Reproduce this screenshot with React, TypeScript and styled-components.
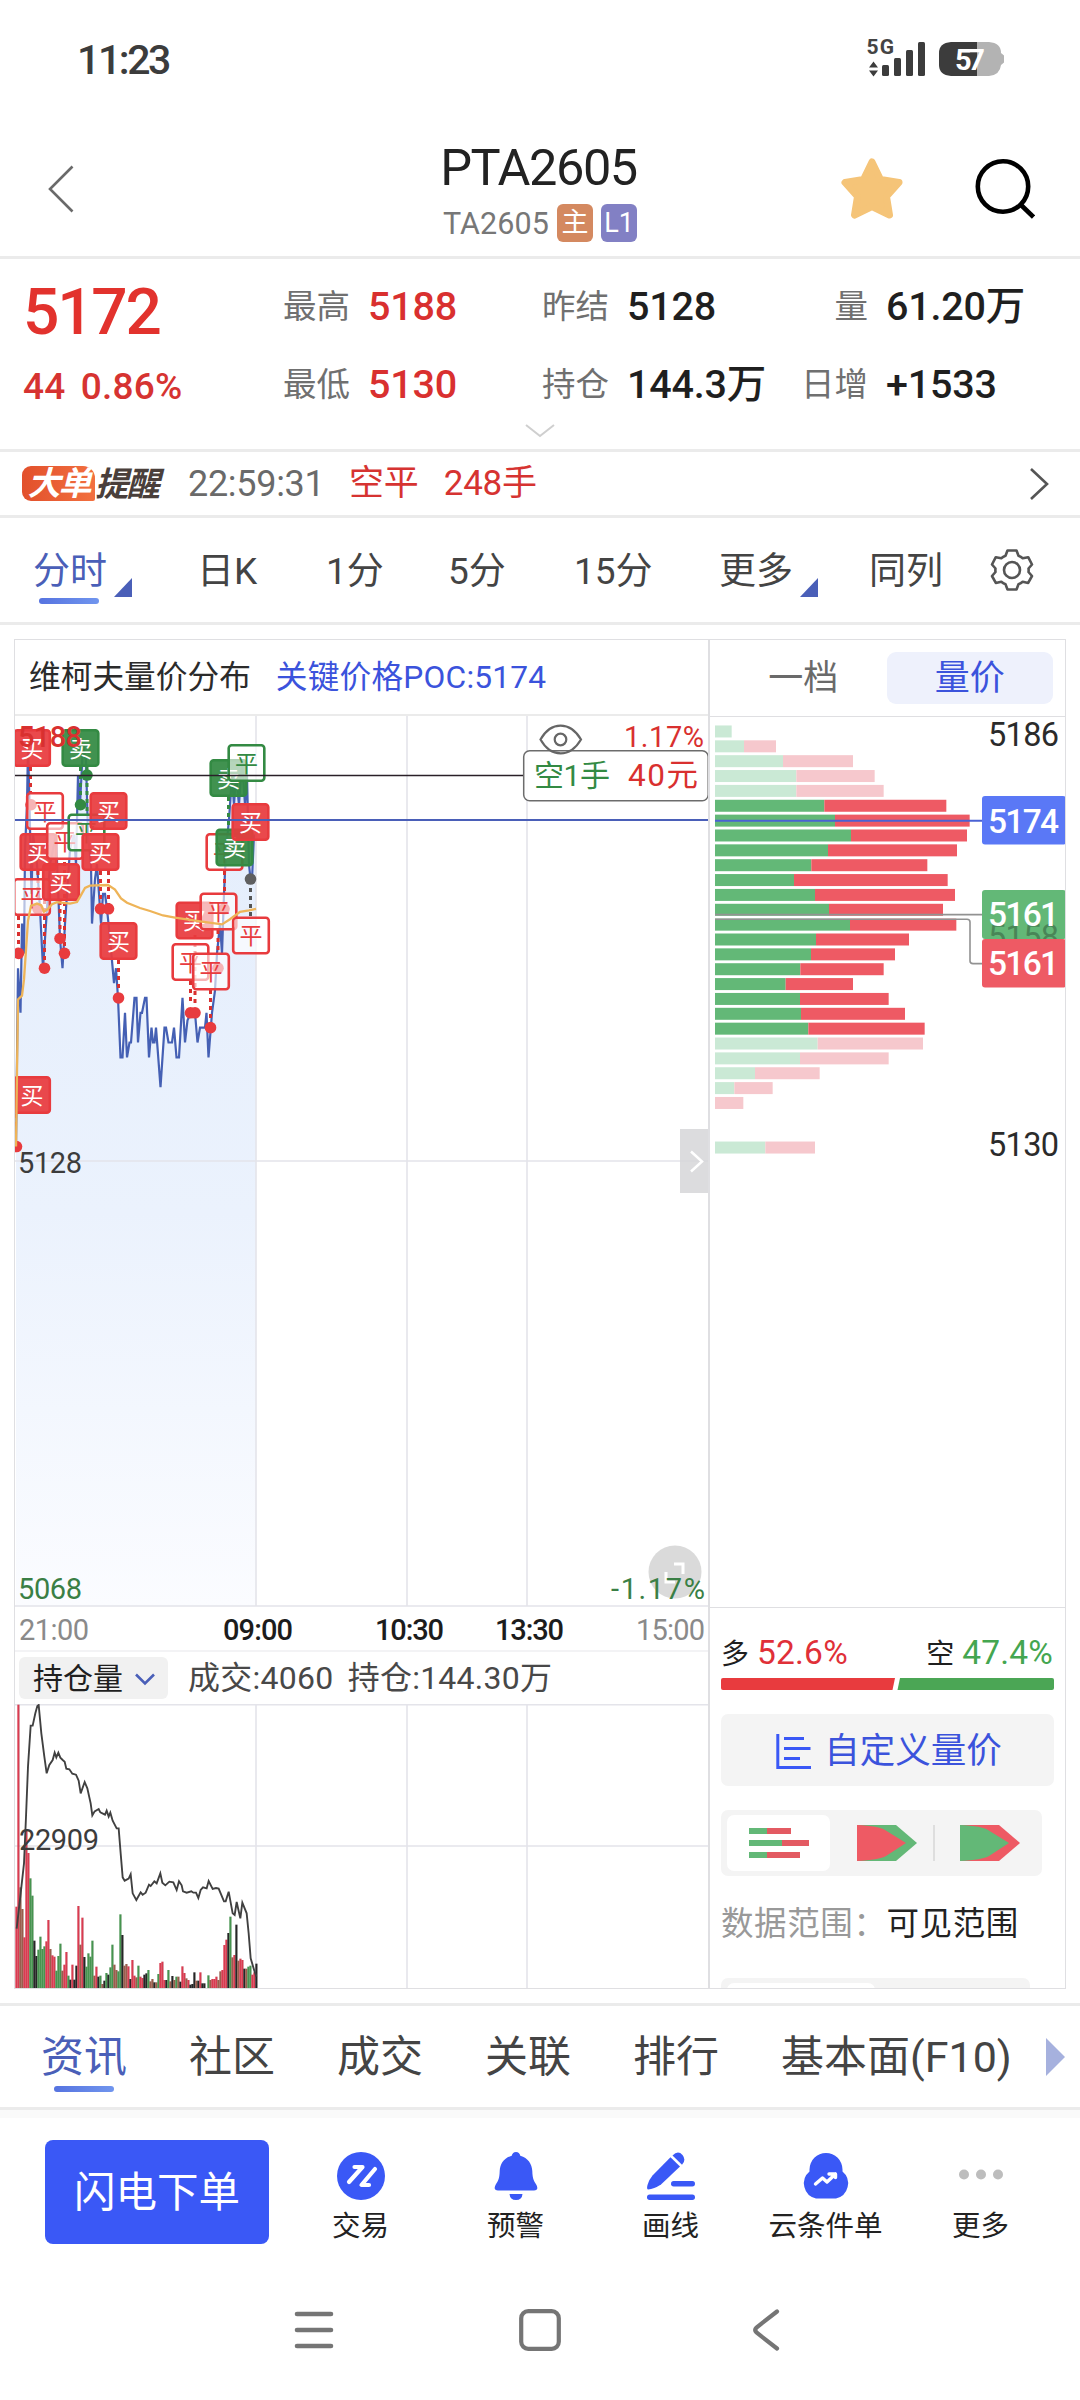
import React from "react";
import styled, { createGlobalStyle, css } from "styled-components";

const C = {
  red: "#d9302f",
  up: "#e83b3e",
  down: "#338a43",
  greenBar: "#63b877",
  redBar: "#ee5a64",
  greenSoft: "#cae9d5",
  redSoft: "#f6c8cd",
  navy: "#4a5fb8",
  blue: "#3b53dc",
  brand: "#3a58f6",
  line: "#ebebeb",
  grid: "#e4e4ea",
  ink: "#1f1f1f",
};

const FONT = `Roboto, "Noto Sans CJK SC", sans-serif`;

const Global = createGlobalStyle`
  html, body { margin: 0; padding: 0; background: #fff; }
  body { font-family: ${FONT}; color: ${C.ink}; line-height: 1.2; }
  * { box-sizing: border-box; }
  svg { display: block; flex: none; }
  svg text { font-family: ${FONT}; }
`;

const Screen = styled.div`
  width: 1080px;
  height: 2400px;
  display: flex;
  flex-direction: column;
  background: #fff;
  overflow: hidden;
  white-space: nowrap;
`;

/* ---------- status bar & header ---------- */

const StatusBar = styled.div`
  height: 118px;
  padding: 0 76px 0 77px;
  display: flex;
  align-items: center;
  justify-content: space-between;
`;

const Clock = styled.div`
  padding-top: 3px;
  font-size: 41px;
  font-weight: 500;
  letter-spacing: -2.4px;
  color: #3c3c3c;
`;

const Header = styled.div`
  height: 141px;
  border-bottom: 3px solid ${C.line};
  display: grid;
  grid-template-columns: 1fr auto 1fr;
`;

const HeaderSide = styled.div<{ $end?: boolean }>`
  display: flex;
  align-items: center;
  justify-content: ${(p) => (p.$end ? "flex-end" : "flex-start")};
  gap: 72px;
  padding: ${(p) => (p.$end ? "3px 45px 0 0" : "3px 0 0 48px")};
`;

const TitleBlock = styled.div`
  display: flex;
  flex-direction: column;
  align-items: center;
  padding-top: 20px;
`;

const Title = styled.div`
  margin-right: 3px;
  font-size: 50.5px;
  line-height: 60px;
  letter-spacing: -1.4px;
  color: #222;
`;

const SubTitle = styled.div`
  height: 38px;
  margin-top: 6px;
  display: flex;
  align-items: center;
  gap: 8px;
  font-size: 30.5px;
  color: #777;
`;

const Code = styled.span`
  padding-top: 2px;
  letter-spacing: 0.1px;
`;

const Badge = styled.span<{ $bg: string }>`
  width: 36px;
  height: 38px;
  border-radius: 6px;
  background: ${(p) => p.$bg};
  color: #fff;
  font-size: 27px;
  line-height: 39px;
  text-align: center;
`;

/* ---------- quote ---------- */

const Quote = styled.div`
  height: 193px;
  border-bottom: 3px solid ${C.line};
  padding-top: 8px;
  display: grid;
  grid-template-columns: 283px 259px 259px 279px;
  grid-template-rows: 78px 78px 15px;
  align-items: center;
`;

const Last = styled.div`
  padding: 13px 0 0 23px;
  font-size: 64px;
  line-height: 68px;
  font-weight: 500;
  letter-spacing: -2.2px;
  color: #e2322d;
`;

const Change = styled.div`
  padding: 7px 0 0 23px;
  font-size: 37px;
  font-weight: 500;
  word-spacing: 6px;
  letter-spacing: 0.2px;
  color: #d63331;
`;

const Stat = styled.div`
  display: flex;
  align-items: center;
`;

const StatLabel = styled.span`
  width: 67px;
  margin-right: 18px;
  padding-top: 3px;
  font-size: 33.5px;
  text-align: right;
  color: #707070;
`;

const StatValue = styled.span<{ $up?: boolean }>`
  padding-top: 1px;
  font-size: 39.5px;
  font-weight: 500;
  letter-spacing: -0.2px;
  color: ${(p) => (p.$up ? C.red : C.ink)};
`;

const Expand = styled.div`
  grid-column: 1 / -1;
  display: flex;
  justify-content: center;
`;

/* ---------- alert ---------- */

const Alert = styled.div`
  height: 66px;
  border-bottom: 3px solid ${C.line};
  padding: 0 31px 0 22px;
  display: flex;
  align-items: center;
`;

const AlertTag = styled.span`
  width: 73px;
  height: 35px;
  border-radius: 9px 12px 2px 9px;
  background: linear-gradient(90deg, #e2502c, #f2703f);
  color: #fff;
  font-size: 33px;
  font-weight: 700;
  line-height: 35px;
  letter-spacing: -2px;
  text-align: center;
  font-style: italic;
`;

const AlertName = styled.span`
  width: 93px;
  padding-top: 3px;
  font-size: 33.5px;
  font-weight: 700;
  letter-spacing: -2px;
  font-style: italic;
  color: #4a3f3b;
`;

const AlertTime = styled.span`
  width: 161px;
  padding-top: 3px;
  font-size: 36px;
  letter-spacing: -0.3px;
  color: #6a6a6a;
`;

const AlertText = styled.span`
  flex: 1;
  font-size: 35px;
  word-spacing: 17px;
  letter-spacing: -0.3px;
  color: #d63331;
`;

/* ---------- tabs ---------- */

const underline = css`
  &::after {
    content: "";
    position: absolute;
    width: 60px;
    height: 6px;
    border-radius: 3px;
    background: linear-gradient(90deg, #5673e0, #7095ee);
  }
`;

const PeriodTabs = styled.div`
  height: 107px;
  border-bottom: 3px solid ${C.line};
  padding-left: 33px;
  display: grid;
  grid-template-columns: 164px 129px 122px 126px 145px 150px 121px auto;
  align-items: center;
`;

const PeriodTab = styled.div<{ $active?: boolean }>`
  position: relative;
  height: 104px;
  padding-top: 4px;
  display: flex;
  align-items: center;
  font-size: 37px;
  color: ${(p) => (p.$active ? C.navy : "#444")};
  ${(p) => p.$active && underline}
  &::after {
    left: 6px;
    top: 80px;
  }
`;

const Corner = styled.i`
  align-self: flex-end;
  width: 18px;
  height: 19px;
  margin: 0 0 25px 7px;
  background: ${C.navy};
  clip-path: polygon(100% 0, 100% 100%, 0 100%);
`;

/* ---------- chart panel ---------- */

const Panel = styled.div`
  flex: none;
  margin: 14px 14px 0;
  height: 1350px;
  border: 1px solid #dfdfe2;
  display: flex;
  overflow: hidden;
`;

const Left = styled.div`
  width: 694px;
  flex: none;
`;

const ChartHead = styled.div`
  height: 76px;
  border-bottom: 2px solid ${C.line};
  padding: 2px 0 0 14px;
  display: flex;
  align-items: center;
  gap: 25px;
  font-size: 31.7px;
  color: #2b2b2b;
`;

const Poc = styled.span`
  letter-spacing: 0.2px;
  color: ${C.blue};
`;

const SubBar = styled.div`
  height: 54px;
  border-top: 2px solid #f3f3f5;
  display: flex;
  align-items: center;
  gap: 20px;
  padding-left: 4px;
  font-size: 32px;
  color: #484848;
  word-spacing: 6px;
  letter-spacing: 0.25px;
`;

const Indicator = styled.div`
  width: 149px;
  height: 42px;
  border-radius: 6px;
  background: #f1f1f1;
  display: flex;
  align-items: center;
  justify-content: space-between;
  padding: 2px 13px 0 14px;
  font-size: 30px;
  letter-spacing: 0;
  color: #1f1f1f;
`;

const Right = styled.div`
  flex: 1;
  margin-left: -1px;
  border-left: 2px solid #dfdfe2;
  display: flex;
  flex-direction: column;
`;

const SideTabs = styled.div`
  height: 77px;
  flex: none;
  border-bottom: 1px solid #dfdfe2;
  display: flex;
  align-items: center;
  padding: 0 12px 0 10px;
`;

const SideTab = styled.div<{ $active?: boolean }>`
  flex: 1;
  height: 52px;
  line-height: 54px;
  border-radius: 9px;
  text-align: center;
  font-size: 35px;
  color: ${(p) => (p.$active ? C.blue : "#6a6a6a")};
  background: ${(p) => (p.$active ? "#eef1fc" : "transparent")};
`;

const SideFoot = styled.div`
  flex: 1;
  border-top: 1px solid #dfdfe2;
  padding: 24px 11px 0 11px;
  display: flex;
  flex-direction: column;
`;

const Ratio = styled.div`
  height: 46px;
  display: flex;
  align-items: center;
  justify-content: space-between;
  padding: 0 1px 4px 0;
  font-size: 28px;
`;

const RatioValue = styled.span<{ $c: string }>`
  margin-left: 8px;
  font-size: 33.5px;
  letter-spacing: 0.2px;
  color: ${(p) => p.$c};
`;

const Custom = styled.div`
  margin-top: 24px;
  height: 72px;
  border-radius: 7px;
  background: #f4f4f4;
  display: flex;
  align-items: center;
  justify-content: center;
  gap: 13px;
  padding: 3px 0 0 3px;
  font-size: 35.5px;
  color: ${C.blue};
`;

const Segments = styled.div`
  margin-top: 24px;
  width: 321px;
  height: 66px;
  padding: 5px 6px;
  border-radius: 7px;
  background: #f4f4f4;
  display: flex;
`;

const Segment = styled.div<{ $active?: boolean; $rule?: boolean }>`
  position: relative;
  width: 103px;
  flex: none;
  border-radius: 7px;
  padding-left: ${(p) => (p.$active ? 0 : 10)}px;
  background: ${(p) => (p.$active ? "#fff" : "transparent")};
  display: flex;
  align-items: center;
  justify-content: center;
  ${(p) =>
    p.$rule &&
    css`
      &::after {
        content: "";
        position: absolute;
        right: -2px;
        top: 10px;
        width: 2px;
        height: 36px;
        background: #dedede;
      }
    `}
`;

const Range = styled.div`
  margin-top: 22px;
  height: 50px;
  line-height: 52px;
  font-size: 32.5px;
  letter-spacing: 0.6px;
  color: #999;
`;

const RangeValue = styled.span`
  color: #222;
`;

const Peek = styled.div`
  margin-top: 30px;
  width: 309px;
  height: 40px;
  border-radius: 7px;
  background: #f4f4f4;
  padding: 5px 6px;
`;

const PeekActive = styled.div`
  width: 148px;
  height: 34px;
  border-radius: 7px;
  background: #fff;
`;

/* ---------- bottom ---------- */

const InfoTabs = styled.div`
  flex: none;
  margin-top: 14px;
  height: 107px;
  border-top: 3px solid ${C.line};
  border-bottom: 3px solid ${C.line};
  padding-left: 41px;
  display: grid;
  grid-template-columns: 148px 148px 148px 148px 148px 265px auto;
  align-items: center;
`;

const InfoTab = styled.div<{ $active?: boolean }>`
  position: relative;
  font-size: 43px;
  line-height: 100px;
  color: ${(p) => (p.$active ? C.navy : "#444")};
  ${(p) => p.$active && underline}
  &::after {
    left: 13px;
    top: 79px;
  }
`;

const Band = styled.div`
  flex: none;
  height: 8px;
  background: #fafafa;
`;

const Actions = styled.div`
  flex: none;
  height: 148px;
  padding: 22px 0 0 45px;
  display: flex;
`;

const OrderButton = styled.div`
  width: 224px;
  height: 104px;
  margin-right: 14px;
  border-radius: 8px;
  background: ${C.brand};
  color: #fff;
  font-size: 41.5px;
  line-height: 106px;
  text-align: center;
`;

const Action = styled.div`
  width: 155px;
  padding-top: 12px;
  display: flex;
  flex-direction: column;
  align-items: center;
  font-size: 28.5px;
  line-height: 34px;
  gap: 10px;
  color: #222;
`;

const NavBar = styled.div`
  flex: 1;
  padding-top: 43px;
  display: flex;
  justify-content: center;
  gap: 184px;
`;

/* ---------- data ---------- */

const yOf = (price: number) => 1161.4 - (price - 5128) * 7.43;

const PRICES: [number, number][] = [
  [16, 5130], [18, 5154], [20.5, 5148], [22, 5160], [24, 5156], [25, 5170], [27, 5176], [28, 5184],
  [29.5, 5176], [31.5, 5164], [33, 5172], [37, 5168], [40, 5162], [43, 5154], [46, 5160], [50, 5168],
  [56, 5172], [60, 5158], [62.5, 5154], [65, 5160], [70, 5170], [74, 5172], [76, 5168], [78, 5180],
  [80, 5176], [83, 5184], [86, 5182], [88, 5172], [91, 5168], [92, 5160], [95, 5166], [97, 5168],
  [101, 5160], [103, 5164], [105, 5164], [107, 5162], [110, 5158], [112, 5155], [114, 5152], [116, 5154],
  [118, 5150], [120.5, 5142], [122.5, 5142], [125, 5148], [127, 5142], [129.5, 5144], [131, 5144],
  [134.5, 5150], [136.5, 5150], [138, 5144], [140.5, 5148], [142, 5148], [145, 5150], [146.5, 5150],
  [149, 5142], [151.5, 5146], [153, 5144], [154.5, 5144], [156, 5146], [160.5, 5138], [164.5, 5146],
  [166, 5146], [168.5, 5144], [172, 5144], [174, 5146], [176.5, 5142], [179, 5142], [182.5, 5150],
  [185, 5144], [187.5, 5147], [191, 5148], [195, 5148], [197.5, 5144], [200, 5146], [205, 5146],
  [206.5, 5148], [208.5, 5142], [212, 5148], [215, 5151], [217, 5156], [220, 5160], [222, 5156],
  [224, 5164], [226, 5170], [229, 5174], [232, 5180], [234, 5176], [236, 5180], [239, 5176], [242, 5182],
  [245, 5176], [247, 5180], [249, 5168], [250.5, 5166], [252, 5166], [254, 5172],
];

const AVERAGE: [number, number][] = [
  [16, 5130], [17, 5140], [18, 5149.8], [22, 5150.3], [24, 5152.5], [28, 5160.4], [31, 5162.4],
  [37, 5162.7], [41, 5162.5], [44, 5161.6], [48, 5162], [52, 5162.6], [57, 5162.9], [70, 5162.7],
  [77, 5162.9], [80, 5163.6], [85, 5164.8], [90, 5165.1], [108, 5165.2], [115, 5164.6], [121, 5163.4],
  [127, 5162.8], [140, 5162.1], [150, 5161.7], [163, 5161.1], [175, 5160.8], [200, 5160.3],
  [222, 5159.9], [230, 5160.6], [240, 5161.6], [249, 5161.8], [256, 5162],
];

const path = (pts: [number, number][]) => pts.map(([x, p]) => `${x},${yOf(p).toFixed(1)}`).join(" ");

type Mark = { x: number; y: number; t: string; c: string; hollow?: boolean };
const MARKS: Mark[] = [
  { x: 13, y: 729, t: "买", c: C.up },
  { x: 61.5, y: 729, t: "卖", c: C.down },
  { x: 26, y: 792, t: "平", c: C.up, hollow: true },
  { x: 19.5, y: 833, t: "买", c: C.up },
  { x: 46, y: 822, t: "平", c: C.up, hollow: true },
  { x: 67.5, y: 813.5, t: "平", c: C.down, hollow: true },
  { x: 89.5, y: 792, t: "买", c: C.up },
  { x: 81.5, y: 833, t: "买", c: C.up },
  { x: 13, y: 878, t: "平", c: C.up, hollow: true },
  { x: 42, y: 863, t: "买", c: C.up },
  { x: 99.5, y: 922, t: "买", c: C.up },
  { x: 13, y: 1076, t: "买", c: C.up },
  { x: 209.5, y: 759, t: "卖", c: C.down },
  { x: 227.5, y: 744, t: "平", c: C.down, hollow: true },
  { x: 205.5, y: 833, t: "平", c: C.up, hollow: true },
  { x: 215.5, y: 828.5, t: "卖", c: C.down },
  { x: 231.5, y: 803, t: "买", c: C.up },
  { x: 175.5, y: 901.5, t: "买", c: C.up },
  { x: 199.5, y: 892.5, t: "平", c: C.up, hollow: true },
  { x: 171.5, y: 943, t: "平", c: C.up, hollow: true },
  { x: 192, y: 952.5, t: "平", c: C.up, hollow: true },
  { x: 232, y: 916.5, t: "平", c: C.up, hollow: true },
];

const DOTS: [number, number, string][] = [
  [31, 5176, C.up], [18.5, 5156, C.up], [44.5, 5154, C.up], [38, 5162, C.up], [60, 5158, C.up], [64.5, 5156, C.up],
  [100.5, 5162, C.up], [108.5, 5162, C.up], [118.5, 5150, C.up], [190.5, 5148, C.up], [195, 5148, C.up],
  [210.5, 5146, C.up], [16.5, 5130, C.up], [218, 5154, C.up], [224, 5162, C.up], [87, 5180, C.down], [80.5, 5176, C.down],
];

const STEMS: [number, number, number, string][] = [
  [30.5, 767, 792, C.red], [18.5, 916, 950, C.red], [44.5, 900, 960, C.red], [38, 871, 900, C.red],
  [60, 901, 935, C.red], [64.5, 862, 950, C.red], [108.5, 871, 905, C.red], [100.5, 871, 905, C.red],
  [118.5, 960, 990, C.red], [190.5, 981, 1005, C.red], [195, 935, 1005, C.red], [210.5, 990, 1020, C.red],
  [15.5, 1114, 1140, C.red], [224.5, 871, 895, C.red], [218, 930, 955, C.red], [80.5, 767, 800, C.down],
  [87, 767, 815, C.down], [228.5, 797, 830, C.down], [250.5, 880, 917, "#555"],
];

/* price, seller end, total end, inside value area */
const LEVELS: [number, number, number, number][] = [
  [5186, 95, 95, 0], [5184, 132, 228, 0], [5182, 249, 459, 0], [5180, 289, 524, 0], [5178, 289, 551, 0],
  [5176, 373, 739, 1], [5174, 405, 809, 1], [5172, 453, 801, 1], [5170, 384, 771, 1], [5168, 334, 682, 1],
  [5166, 282, 743, 1], [5164, 345, 765, 1], [5162, 387, 729, 1], [5160, 450, 769, 1], [5158, 348, 627, 1],
  [5156, 333, 585, 1], [5154, 301, 551, 1], [5152, 257, 459, 1], [5150, 300, 566, 1], [5148, 303, 615, 1],
  [5146, 325, 674, 1], [5144, 353, 669, 0], [5142, 300, 566, 0], [5140, 165, 359, 0], [5138, 103, 218, 0],
  [5136, 45, 130, 0], [5130, 196, 345, 0],
];

const VOLUME =
  "R244 R850 B302 B237 R152 R477 R405 G329 G277 K142 K96 G115 G154 G117 G125 R140 R204 B117 R98 R94 G52 G96 G133 B52 R70 R108 G37 K25 R70 K25 K67 R246 B130 R211 K93 G64 G104 G94 G142 B37 R64 K34 G37 B12 K22 G45 K40 G62 G130 B70 B54 G50 G221 K159 B67 B72 R65 K27 R84 R37 B32 G67 R34 R30 K40 K44 G54 B20 B27 K17 B17 G42 R75 R79 R24 K24 G54 B20 K36 B24 G34 B34 K19 R65 R45 B29 R24 K10 K12 K47 B22 K22 R47 K14 K14 B0 G38 B24 R27 R27 R34 B24 B50 R54 R129 R145 K165 G214 B92 R99 K190 B82 R88 R84 K58 B58 G64 G67 R40 R47 K73".split(
    " "
  );
const VCOLOR: Record<string, string> = { R: "#d93b50", G: "#46944f", B: "#9a5d4c", K: "#262626" };

const INTEREST =
  "50,686 62,580 72,490 78,350 84,200 92,77 98,77 106,40 112,18 116,15 124,100 133,170 140,220 148,195 158,180 164,158 169,172 175,158 181,173 188,180 194,185 199,206 208,208 217,221 228,224 236,242 242,280 254,246 262,265 272,310 277,346 284,334 296,327 301,337 315,344 320,332 326,350 331,338 338,362 350,385 356,385 362,460 368,532 374,542 386,536 392,523 398,580 409,600 422,577 428,584 437,578 447,554 452,558 463,544 470,550 481,520 487,548 496,556 508,545 520,547 530,570 537,544 545,556 549,574 560,578 574,574 580,578 588,578 595,594 602,570 609,562 620,565 626,543 638,567 648,564 656,566 672,604 677,604 686,575 698,640 704,645 710,606 721,655 727,608 740,640 746,700 752,775 763,812 769,830";

/* ---------- drawings ---------- */

const Marker = ({ m }: { m: Mark }) => (
  <g>
    <rect
      x={m.x + 1.2}
      y={m.y + 1.2}
      width={35.6}
      height={35.6}
      rx={3}
      fill={m.hollow ? "#fff" : m.c}
      fillOpacity={m.hollow ? 0.62 : 0.93}
      stroke={m.c}
      strokeWidth={2.6}
    />
    <text x={m.x + 19} y={m.y + 27.5} fontSize={23} textAnchor="middle" fill={m.hollow ? m.c : "#fff"}>
      {m.t}
    </text>
  </g>
);

const Num = (p: {
  x: number;
  y: number;
  w: number;
  c: string;
  s?: number;
  weight?: number;
  o?: number;
  children: React.ReactNode;
}) => (
  <text x={p.x} y={p.y} textLength={p.w} fontSize={p.s ?? 29} fontWeight={p.weight ?? 400} fill={p.c} opacity={p.o}>
    {p.children}
  </text>
);

const PriceChart = () => (
  <svg width="694" height="934" viewBox="15 716 694 934">
    <defs>
      <linearGradient id="area" x1="0" y1="730" x2="0" y2="1606" gradientUnits="userSpaceOnUse">
        <stop offset="0" stopColor="#e3edfc" />
        <stop offset=".55" stopColor="#ebf2fd" />
        <stop offset="1" stopColor="#fbfcff" />
      </linearGradient>
    </defs>
    <polygon points={`${path(PRICES)} 256,830 256,1606 16,1606`} fill="url(#area)" />
    <path d="M256 716V1606M407 716V1606M527 716V1606M15 1161H709M15 1606H709" stroke={C.grid} strokeWidth="1.6" />
    <circle cx="675" cy="1572" r="26.5" fill="#dadada" />
    <path d="M674 1564h9v10M666 1572v10h9" fill="none" stroke="#fff" strokeWidth="3" />
    <polyline points={path(PRICES)} fill="none" stroke="#4560b4" strokeWidth="2.2" />
    {STEMS.map(([x, a, b, c], i) => (
      <line key={i} x1={x} x2={x} y1={a} y2={b} stroke={c} strokeWidth="3" strokeDasharray="4 4" />
    ))}
    {DOTS.map(([x, p, c], i) => (
      <circle key={i} cx={x} cy={yOf(p)} r="5.8" fill={c} />
    ))}
    {MARKS.map((m, i) => (
      <Marker key={i} m={m} />
    ))}
    <circle cx="250.5" cy={yOf(5166)} r="5.8" fill="#5f5f5f" />
    <polyline points={path(AVERAGE)} fill="none" stroke="#eeb458" strokeWidth="2.3" />
    <path d="M15 775.5H523" stroke="#2a2028" strokeWidth="1.3" />
    <path d="M15 820H709" stroke={C.navy} strokeWidth="2.2" />
    <Num x={18} y={747} w={64} c={C.red} weight={500}>5188</Num>
    <Num x={18} y={1173} w={64} c="#3c3c3c">5128</Num>
    <Num x={18} y={1599} w={64} c="#3a7f45">5068</Num>
    <Num x={624} y={747} w={80} c={C.red}>1.17%</Num>
    <Num x={611} y={1599} w={94} c="#3a7f45">-1.17%</Num>
    <rect x="523.7" y="750.7" width="184.5" height="50" rx="6" fill="#fff" fillOpacity=".9" stroke="#6c6c6c" strokeWidth="1.5" />
    <g fill="none" stroke="#666" strokeWidth="2.2">
      <path d="M540.5 739.5C551 721 570 721 581 739.5C570 758 551 758 540.5 739.5Z" />
      <circle cx="560.5" cy="739.5" r="5.8" />
    </g>
    <Num x={534} y={786} w={76} s={30} c={C.down}>空1手</Num>
    <Num x={628} y={786} w={70} s={31.5} c={C.red}>40元</Num>
    <rect x="680" y="1129" width="29" height="64" fill="#d6d6d8" fillOpacity=".85" />
    <path d="M691 1151.5L702 1161.5L691 1171.5" fill="none" stroke="#fff" strokeWidth="2.5" />
    <Num x={19} y={1640} w={70} c="#8a8a8a">21:00</Num>
    <Num x={223} y={1640} w={70} c="#1c1c1c" weight={500}>09:00</Num>
    <Num x={375} y={1640} w={69} c="#1c1c1c" weight={500}>10:30</Num>
    <Num x={495} y={1640} w={69} c="#1c1c1c" weight={500}>13:30</Num>
    <Num x={636} y={1640} w={69} c="#8a8a8a">15:00</Num>
  </svg>
);

const VolumeChart = () => (
  <svg width="694" height="284" viewBox="15 1704 694 284">
    <path d="M256 1704V1988M407 1704V1988M527 1704V1988M15 1846H709M15 1704.8H709" stroke={C.grid} strokeWidth="1.6" />
    <g transform="translate(0 1700) scale(.33333)">
      {VOLUME.map((v, i) => {
        const h = Number(v.slice(1));
        return (
          <g key={i}>
            <rect x={46 + i * 6} y={864 - h} width="6.3" height={h} fill={VCOLOR[v[0]]} />
            <rect x={51 + i * 6} y={864 - h} width="1.3" height={h} fill="#222" opacity=".2" />
          </g>
        );
      })}
      <polyline points={INTEREST} fill="none" stroke="#404040" strokeWidth="5.6" />
    </g>
    <Num x={19} y={1850} w={80} c="#3c3c3c">22909</Num>
  </svg>
);

const Profile = () => (
  <svg width="355" height="890" viewBox="710 717 355 890">
    {LEVELS.map(([p, a, b, on]) => {
      const y = yOf(p) - 5;
      return (
        <g key={p}>
          <rect x="715" y={y} width={(a - 45) / 3} height="12" fill={on ? C.greenBar : C.greenSoft} />
          <rect x={700 + a / 3} y={y} width={(b - a) / 3} height="12" fill={on ? C.redBar : C.redSoft} />
        </g>
      );
    })}
    <path d="M715 820.7H982" stroke="#4a62d4" strokeWidth="2" />
    <path d="M715 914.6H982M715 919.3H967Q970 919.3 970 922V961Q970 963.6 973 963.6H982" fill="none" stroke="#929292" strokeWidth="1.6" />
    <Num x={988} y={746} w={71} s={32.5} c="#2b2b2b">5186</Num>
    <Num x={988} y={1156} w={71} s={32.5} c="#2b2b2b">5130</Num>
    <rect x="982" y="796" width="84" height="48.5" rx="3" fill="#5a78f6" />
    <rect x="982" y="890" width="84" height="49" rx="3" fill={C.greenBar} />
    <Num x={988} y={948} w={71} s={32.5} c="#2b4a32" o={0.45}>5158</Num>
    <rect x="982" y="939" width="84" height="48.5" rx="3" fill={C.redBar} />
    <Num x={988} y={832.5} w={71} s={33.5} weight={500} c="#fff">5174</Num>
    <Num x={988} y={926} w={71} s={33.5} weight={500} c="#fff">5161</Num>
    <Num x={988} y={975} w={71} s={33.5} weight={500} c="#fff">5161</Num>
  </svg>
);

const StatusIcons = () => (
  <svg width="142" height="50" viewBox="862 34 142 50">
    <text x="866.5" y="53.5" fontSize="21" fontWeight="700" textLength="27.5" fill="#444">5G</text>
    <path d="M873.5 61.5l4.5 6h-9zM873.5 76.5l4.5-6h-9z" fill="#3c3c3c" />
    <g fill="#3c3c3c">
      <rect x="882" y="65" width="7" height="11" rx="1.5" />
      <rect x="894" y="58" width="7" height="18" rx="1.5" />
      <rect x="906" y="50" width="7" height="26" rx="1.5" />
      <rect x="918" y="42" width="7" height="34" rx="1.5" />
    </g>
    <path d="M977 42H989Q1001 43 1001 53L1004 55.5V62.5L1001 65Q1000 75 989 76H977Z" fill="#b3b3b3" />
    <path d="M977 42H951Q939 43 939 53V65Q939 75 951 76H977Z" fill="#3c3c3c" />
    <text x="955" y="69.5" fontSize="29" fontWeight="700" textLength="30" fill="#fff">57</text>
  </svg>
);

const Gear = () => (
  <svg width="44" height="44" viewBox="0 0 44 44" fill="none" stroke="#555" strokeWidth="2.6" strokeLinejoin="round">
    <path d="M17.5 2.5H26.5L28.5 7.8Q31 8.7 32.7 10.2L38.2 9.2L42 16.5L38.5 20.5Q38.8 22.5 38.5 24L42 28L38.2 34.9L32.7 33.8Q31 35.4 28.5 36.3L26.5 41.5H17.5L15.5 36.3Q13 35.4 11.3 33.8L5.8 34.9L2 28L5.5 24Q5.2 22 5.5 20.5L2 16.5L5.8 9.2L11.3 10.2Q13 8.7 15.5 7.8Z" />
    <circle cx="22" cy="22" r="8" />
  </svg>
);

const TradeIcon = () => (
  <svg width="48" height="48" viewBox="0 0 48 48">
    <circle cx="24" cy="24" r="24" fill={C.brand} />
    <path d="M17.5 15H25.5L12 30M38 17L24.5 33H32" fill="none" stroke="#fff" strokeWidth="4.2" strokeLinecap="round" strokeLinejoin="round" />
  </svg>
);

const BellIcon = () => (
  <svg width="48" height="48" viewBox="0 0 48 48" fill={C.brand}>
    <path d="M24 0Q27.5 0 28.3 3.8C36 6 40 12 40.3 19C40.5 27 42 29 44.5 33Q47 38.5 42 38.5H6Q1 38.5 3.5 33C6 29 7.5 27 7.7 19C8 12 12 6 19.7 3.8Q20.5 0 24 0Z" />
    <path d="M17.5 42H30.5Q30 48 24 48Q18 48 17.5 42Z" />
  </svg>
);

const DrawIcon = () => (
  <svg width="48" height="48" viewBox="0 0 48 48" fill={C.brand}>
    <path d="M23.5 5.2L33 14.5L14 32.5Q7 37 1 37.5Q-.5 37 .5 33Q2 27.5 5.5 23.5Z" />
    <path d="M25.5 3.5Q31-2 35.5 3Q39.5 8 35 12.8Z" />
    <rect x="24" y="29" width="24" height="5.5" rx="2.7" />
    <rect x="0" y="42.5" width="48" height="5.5" rx="2.7" />
  </svg>
);

const CloudIcon = () => (
  <svg width="48" height="48" viewBox="0 0 48 48">
    <path d="M7.5 17.5A16.5 16.5 0 0 1 40.5 17.5V19.5A15.5 15.5 0 0 1 34 46.5H14A15.5 15.5 0 0 1 7.5 19.5Z" fill={C.brand} />
    <path d="M13.5 32L20.5 26L25 30L33.5 22M27 22H33.5V25.5" fill="none" stroke="#fff" strokeWidth="3.4" strokeLinecap="round" strokeLinejoin="round" />
  </svg>
);

const MoreIcon = () => (
  <svg width="48" height="48" viewBox="0 0 48 48" fill="#bdbdbd">
    <circle cx="7" cy="22.5" r="5" />
    <circle cx="24" cy="22.5" r="5" />
    <circle cx="41" cy="22.5" r="5" />
  </svg>
);

const Pennant = ({ outer, inner }: { outer: string; inner: string }) => (
  <svg width="60" height="36" viewBox="0 0 60 36">
    <path d="M0 0H39L60 18L39 36H0Z" fill={outer} />
    <path d="M0 0Q22 1 28 5L49 18L29 31Q22 35 0 36Z" fill={inner} />
  </svg>
);

/* ---------- page ---------- */

const STATS: [string, string, boolean][][] = [
  [["最高", "5188", true], ["昨结", "5128", false], ["量", "61.20万", false]],
  [["最低", "5130", true], ["持仓", "144.3万", false], ["日增", "+1533", false]],
];

const StatRow = ({ items }: { items: [string, string, boolean][] }) => (
  <>
    {items.map(([label, value, up]) => (
      <Stat key={label}>
        <StatLabel>{label}</StatLabel>
        <StatValue $up={up}>{value}</StatValue>
      </Stat>
    ))}
  </>
);

const ACTIONS: [string, React.ReactNode][] = [
  ["交易", <TradeIcon />],
  ["预警", <BellIcon />],
  ["画线", <DrawIcon />],
  ["云条件单", <CloudIcon />],
  ["更多", <MoreIcon />],
];

export default function App() {
  return (
    <Screen>
      <Global />
      <StatusBar>
        <Clock>11:23</Clock>
        <StatusIcons />
      </StatusBar>

      <Header>
        <HeaderSide>
          <svg width="26" height="48" viewBox="0 0 26 48" fill="none" stroke="#6a6a6a" strokeWidth="2.6">
            <path d="M24.5 1.5L2 24L24.5 46.5" />
          </svg>
        </HeaderSide>
        <TitleBlock>
          <Title>PTA2605</Title>
          <SubTitle>
            <Code>TA2605</Code>
            <Badge $bg="#d48960">主</Badge>
            <Badge $bg="#8280c4">L1</Badge>
          </SubTitle>
        </TitleBlock>
        <HeaderSide $end>
          <svg width="62" height="62" viewBox="0 0 62 62">
            <path d="M31 4L39.5 21.5L58 24.5L45.5 38.5L48.5 57L31 48.5L13.5 57L16.5 38.5L4 24.5L22.5 21.5Z" fill="#f5c478" stroke="#f5c478" strokeWidth="7" strokeLinejoin="round" />
          </svg>
          <svg width="60" height="60" viewBox="0 0 60 60" fill="none" stroke="#000" strokeWidth="4.6">
            <circle cx="28" cy="27.5" r="25.2" />
            <path d="M45.5 45.5L58.5 58" />
          </svg>
        </HeaderSide>
      </Header>

      <Quote>
        <Last>5172</Last>
        <StatRow items={STATS[0]} />
        <Change>44 0.86%</Change>
        <StatRow items={STATS[1]} />
        <Expand>
          <svg width="32" height="14" viewBox="0 0 32 14" fill="none" stroke="#cfcfcf" strokeWidth="2">
            <path d="M2 1L16 12L30 1" />
          </svg>
        </Expand>
      </Quote>

      <Alert>
        <AlertTag>大单</AlertTag>
        <AlertName>提醒</AlertName>
        <AlertTime>22:59:31</AlertTime>
        <AlertText>空平 248手</AlertText>
        <svg width="20" height="34" viewBox="0 0 20 34" fill="none" stroke="#555" strokeWidth="2.6">
          <path d="M2 2L18 17L2 32" />
        </svg>
      </Alert>

      <PeriodTabs>
        <PeriodTab $active>分时<Corner /></PeriodTab>
        <PeriodTab>日K</PeriodTab>
        <PeriodTab>1分</PeriodTab>
        <PeriodTab>5分</PeriodTab>
        <PeriodTab>15分</PeriodTab>
        <PeriodTab>更多<Corner /></PeriodTab>
        <PeriodTab>同列</PeriodTab>
        <Gear />
      </PeriodTabs>

      <Panel>
        <Left>
          <ChartHead>
            <span>维柯夫量价分布</span>
            <Poc>关键价格POC:5174</Poc>
          </ChartHead>
          <PriceChart />
          <SubBar>
            <Indicator>
              持仓量
              <svg width="20" height="13" viewBox="0 0 20 13" fill="none" stroke={C.navy} strokeWidth="2.6">
                <path d="M1 1.5L10 10.5L19 1.5" />
              </svg>
            </Indicator>
            <span>成交:4060 持仓:144.30万</span>
          </SubBar>
          <VolumeChart />
        </Left>
        <Right>
          <SideTabs>
            <SideTab>一档</SideTab>
            <SideTab $active>量价</SideTab>
          </SideTabs>
          <Profile />
          <SideFoot>
            <Ratio>
              <span>多<RatioValue $c="#e03038">52.6%</RatioValue></span>
              <span>空<RatioValue $c="#44a650">47.4%</RatioValue></span>
            </Ratio>
            <svg width="333" height="12" viewBox="0 0 333 12">
              <path d="M2 0H174L171.5 12H2Q0 12 0 10V2Q0 0 2 0Z" fill={C.up} />
              <path d="M179 0H331Q333 0 333 2V10Q333 12 331 12H176.5Z" fill="#4ba655" />
            </svg>
            <Custom>
              <svg width="35" height="36" viewBox="0 0 35 36" fill="none" stroke={C.brand} strokeWidth="3">
                <path d="M1.8 0V33.5H35M8 4.5H28M8 14.5H34.5M8 24.5H24" />
              </svg>
              自定义量价
            </Custom>
            <Segments>
              <Segment $active>
                <svg width="60" height="30" viewBox="0 0 60 30">
                  <path d="M0 0H18V6H0ZM0 12H33V18H0ZM0 24H18V30H0Z" fill={C.greenBar} />
                  <path d="M18 0H42V6H18ZM33 12H60V18H33ZM18 24H51V30H18Z" fill="#e35a62" />
                </svg>
              </Segment>
              <Segment $rule>
                <Pennant outer={C.greenBar} inner={C.redBar} />
              </Segment>
              <Segment>
                <Pennant outer={C.redBar} inner={C.greenBar} />
              </Segment>
            </Segments>
            <Range>
              数据范围：<RangeValue>可见范围</RangeValue>
            </Range>
            <Peek>
              <PeekActive />
            </Peek>
          </SideFoot>
        </Right>
      </Panel>

      <InfoTabs>
        <InfoTab $active>资讯</InfoTab>
        <InfoTab>社区</InfoTab>
        <InfoTab>成交</InfoTab>
        <InfoTab>关联</InfoTab>
        <InfoTab>排行</InfoTab>
        <InfoTab>基本面(F10)</InfoTab>
        <svg width="19" height="38" viewBox="0 0 19 38">
          <path d="M0 0L19 19L0 38Z" fill="#a6b1de" />
        </svg>
      </InfoTabs>
      <Band />
      <Actions>
        <OrderButton>闪电下单</OrderButton>
        {ACTIONS.map(([label, icon]) => (
          <Action key={label}>
            {icon}
            {label}
          </Action>
        ))}
      </Actions>
      <NavBar>
        <svg width="42" height="42" viewBox="0 0 42 42" stroke="#757575" strokeWidth="4.6" strokeLinecap="round">
          <path d="M4 5H38M4 21H38M4 37H38" />
        </svg>
        <svg width="42" height="42" viewBox="0 0 42 42" fill="none" stroke="#757575" strokeWidth="4.2">
          <rect x="2.2" y="2.2" width="37.6" height="37.6" rx="7" />
        </svg>
        <svg width="42" height="42" viewBox="0 0 42 42" fill="none" stroke="#757575" strokeWidth="4.2" strokeLinecap="round">
          <path d="M32 2.5L11.5 18.5Q9 21 11.5 23.5L32 39.5" />
        </svg>
      </NavBar>
    </Screen>
  );
}
